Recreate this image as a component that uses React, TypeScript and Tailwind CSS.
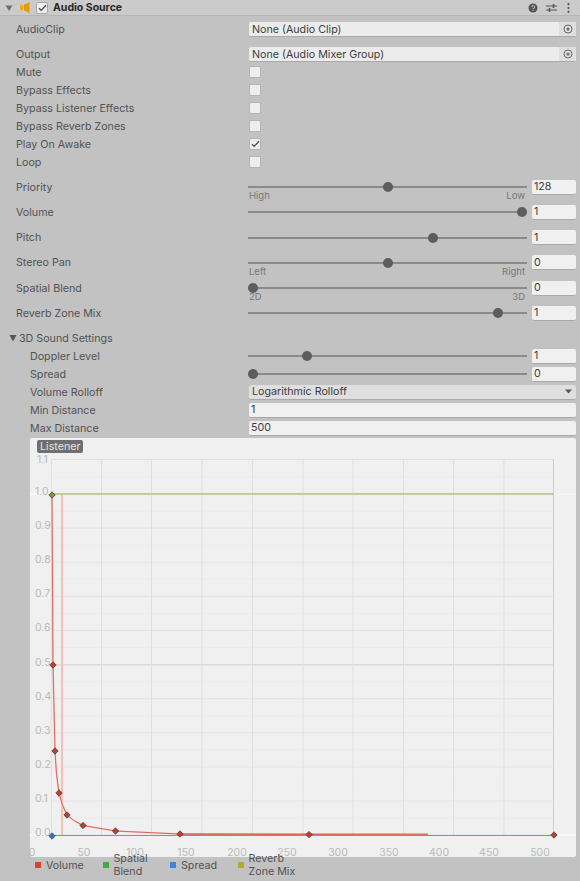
import type { ReactNode } from "react";

function Label({ text, indent }: { text: string; indent?: boolean }) {
  return (
    <span className={`w-[249px] shrink-0 text-[#525252] ${indent ? "pl-[30px]" : "pl-[16px]"}`}>
      {text}
    </span>
  );
}

function Row({ label, indent, children }: { label: string; indent?: boolean; children?: ReactNode }) {
  return (
    <div className="flex h-[18px] items-center">
      <Label text={label} indent={indent} />
      {children}
    </div>
  );
}

function Check({ on }: { on?: boolean }) {
  return (
    <div className="flex h-[12px] w-[12px] items-center justify-center rounded-[2px] border border-[#b5b5b5] bg-[#eeeeee]">
      {on && (
        <svg width="9" height="8" viewBox="0 0 9 8" fill="none">
          <path d="M1 4.2 L3.2 6.4 L8 1.2" stroke="#4a4a4a" strokeWidth="1.3" />
        </svg>
      )}
    </div>
  );
}

function ObjectField({ text }: { text: string }) {
  return (
    <div className="flex h-[15px] w-[327px] items-center rounded-[2px] border-b border-[#a9a9a9] bg-[#ececec] text-[#3d3d3d]">
      <span className="flex-1 pl-[3px]">{text}</span>
      <div className="flex h-full w-[17px] items-center justify-center bg-[#dfdfdf]">
        <svg width="10" height="10" viewBox="0 0 10 10" fill="none">
          <circle cx="5" cy="5" r="4" stroke="#666666" strokeWidth="1" />
          <circle cx="5" cy="5" r="1.5" fill="#666666" />
        </svg>
      </div>
    </div>
  );
}

function TextField({ text, width = "w-[327px]" }: { text: string; width?: string }) {
  return (
    <div className={`flex h-[15px] items-center rounded-[2px] border-b border-[#a9a9a9] bg-[#f0f0f0] pl-[2px] text-[#3d3d3d] ${width}`}>
      {text}
    </div>
  );
}

function Slider({ percent, value }: { percent: number; value: string }) {
  return (
    <div className="flex w-[331px] items-center">
      <div className="relative ml-[-1px] h-[2px] w-[279px] bg-[#8a8a8a]">
        <div
          className="absolute top-[-4px] ml-[-5px] h-[10px] w-[10px] rounded-full bg-[#5d5d5d]"
          style={{ left: `${percent}%` }}
        />
      </div>
      <div className="ml-[5px]">
        <TextField text={value} width="w-[44px]" />
      </div>
    </div>
  );
}

function SliderRow({
  label,
  percent,
  value,
  low,
  high,
}: {
  label: string;
  percent: number;
  value: string;
  low?: string;
  high?: string;
}) {
  return (
    <div className="h-[25.3px]">
      <Row label={label}>
        <Slider percent={percent} value={value} />
      </Row>
      {low && (
        <div className="ml-[249px] flex h-[7px] w-[276px] items-start justify-between text-[9.5px] leading-[10px] text-[#777777]">
          <span className="mt-[-5px]">{low}</span>
          <span className="mt-[-5px]">{high}</span>
        </div>
      )}
    </div>
  );
}

const majorX = [101.5, 151.5, 202, 252.5, 303, 353, 403.5, 453.5, 504];
const xLabels = [
  [32, "0"],
  [84, "50"],
  [135, "100"],
  [186, "150"],
  [237, "200"],
  [287, "250"],
  [338, "300"],
  [389, "350"],
  [439, "400"],
  [489, "450"],
  [540, "500"],
] as const;
const yLabels = ["1.0", "0.9", "0.8", "0.7", "0.6", "0.5", "0.4", "0.3", "0.2", "0.1", "0.0"];
const keys = [
  [53, 665],
  [55, 751],
  [59, 793],
  [67, 815],
  [83, 825.5],
  [115.5, 831],
  [180, 834],
  [309, 834.6],
  [554, 835],
];

function Diamond({ x, y, fill }: { x: number; y: number; fill: string }) {
  return (
    <path
      d={`M${x} ${y - 3.2} L${x + 3.2} ${y} L${x} ${y + 3.2} L${x - 3.2} ${y} Z`}
      fill={fill}
      stroke="#444444"
      strokeWidth="0.8"
    />
  );
}

function RolloffGraph() {
  const curve = "M52 494 L53 665 L55 751 Q56 775 59 793 Q62 806 67 815 Q73 821 83 825.5 L115.5 831 L180 834 L309 834.6 L428 835";
  return (
    <svg className="block overflow-visible" width="546" height="419" viewBox="30 438 546 419">
      {Array.from({ length: 21 }, (_, i) => (
        <line key={i} x1="51" x2="554" y1={494 + i * 17.06} y2={494 + i * 17.06} stroke={i % 2 ? "#ececec" : "#e3e3e3"} />
      ))}
      <line x1="51" x2="554" y1="477" y2="477" stroke="#ececec" />
      <line x1="51" x2="554" y1="459.5" y2="459.5" stroke="#e0e0e0" />
      <line x1="51" x2="554" y1="665" y2="665" stroke="#d6d6d6" />
      <line x1="51.5" x2="51.5" y1="459" y2="835" stroke="#e0e0e0" />
      {majorX.map((x) => (
        <line key={x} x1={x} x2={x} y1="459" y2="835" stroke="#dfdfdf" />
      ))}
      <line x1="553.5" x2="553.5" y1="459" y2="835" stroke="#cfcfcf" />
      <line x1="30" x2="50" y1="494" y2="494" stroke="#ffffff" />
      <line x1="30" x2="50" y1="835" y2="835" stroke="#ffffff" />
      <line x1="554" x2="576" y1="494" y2="494" stroke="#fafafa" />
      <line x1="554" x2="576" y1="835" y2="835" stroke="#ffffff" />

      <g fontFamily="Inter, sans-serif" fontSize="10.5" fill="#b9b9b9">
        <text x="37" y="463">1.1</text>
        {yLabels.map((t, i) => (
          <text key={t} x="35" y={495 + i * 34.1}>
            {t}
          </text>
        ))}
        {xLabels.map(([x, t]) => (
          <text key={t} x={x} y="856" textAnchor="middle">
            {t}
          </text>
        ))}
      </g>

      <line x1="62" x2="62" y1="494" y2="835" stroke="#f6c0ba" strokeWidth="2" />
      <line x1="52" x2="554" y1="494" y2="494" stroke="#c9c9a0" strokeWidth="2" />
      <path d={curve} fill="none" stroke="#f3c4be" strokeWidth="1.6" />
      <path d={curve} fill="none" stroke="#cf5040" strokeWidth="0.8" />
      <line x1="52" x2="554" y1="835.5" y2="835.5" stroke="#6d93d6" strokeWidth="1.2" />
      <line x1="180" x2="428" y1="834.2" y2="834.2" stroke="#d8675a" strokeWidth="1.2" />

      {keys.map(([x, y]) => (
        <Diamond key={x} x={x} y={y} fill="#c63c28" />
      ))}
      <Diamond x={52} y={495} fill="#8f8f1c" />
      <Diamond x={52} y={836} fill="#3a72d0" />
    </svg>
  );
}

function LegendItem({ color, lines }: { color: string; lines: string[] }) {
  return (
    <div className="flex w-[67.5px] shrink-0 items-center">
      <div className={`mr-[5px] h-[6px] w-[6px] shrink-0 ${color}`} />
      <div className="leading-[13px] text-[#525252]">
        {lines.map((l) => (
          <div key={l} className="whitespace-nowrap">
            {l}
          </div>
        ))}
      </div>
    </div>
  );
}

export default function App() {
  return (
    <div
      className="h-[881px] w-[580px] overflow-hidden bg-[#c2c2c2] text-[10.7px] leading-[13px]"
      style={{ fontFamily: "Inter, sans-serif" }}
    >
      <div className="flex h-[16px] items-center border-b border-[#b5b5b5] bg-[#cbcbcb]">
        <svg className="ml-[5px]" width="8" height="8" viewBox="0 0 8 8">
          <path d="M0.5 1.5 H7.5 L4 7 Z" fill="#6e6e6e" />
        </svg>
        <svg className="ml-[7px]" width="10" height="11" viewBox="0 0 10 11">
          <path d="M0 3 H3 V8 H0 Z" fill="#f0a818" />
          <path d="M4 2.8 L9.5 0 V11 L4 8.2 Z" fill="#e69a00" />
        </svg>
        <div className="ml-[6px] flex h-[12px] w-[12px] items-center justify-center rounded-[2px] border border-[#a8a8a8] bg-[#eeeeee]">
          <svg width="9" height="8" viewBox="0 0 9 8" fill="none">
            <path d="M1 4.2 L3.2 6.4 L8 1.2" stroke="#4a4a4a" strokeWidth="1.3" />
          </svg>
        </div>
        <span className="ml-[5px] flex-1 text-[10.5px] font-bold text-[#262626]">Audio Source</span>
        <svg width="10" height="10" viewBox="0 0 10 10" className="mr-[8px]">
          <circle cx="5" cy="5" r="4.5" fill="#555555" />
          <path d="M3.6 4 A1.5 1.5 0 1 1 5 5.6 V6.2 M5 7 V7.8" stroke="#cbcbcb" strokeWidth="0.9" fill="none" />
        </svg>
        <svg width="11" height="10" viewBox="0 0 11 10" className="mr-[10px]" stroke="#555555" fill="none">
          <path d="M0 3 H11 M0 7 H11" />
          <path d="M7.5 1 V5 M3.5 5 V9" strokeWidth="1.5" />
        </svg>
        <svg width="3" height="10" viewBox="0 0 3 10" className="mr-[10.5px]" fill="#555555">
          <circle cx="1.5" cy="1.2" r="1.1" />
          <circle cx="1.5" cy="5" r="1.1" />
          <circle cx="1.5" cy="8.8" r="1.1" />
        </svg>
      </div>

      <div className="mt-[6px] flex h-[15px] items-center">
        <Label text="AudioClip" />
        <ObjectField text="None (Audio Clip)" />
      </div>
      <div className="mt-[10px] flex h-[15px] items-center">
        <Label text="Output" />
        <ObjectField text="None (Audio Mixer Group)" />
      </div>

      <div className="mt-[1px]">
        <Row label="Mute"><Check /></Row>
        <Row label="Bypass Effects"><Check /></Row>
        <Row label="Bypass Listener Effects"><Check /></Row>
        <Row label="Bypass Reverb Zones"><Check /></Row>
        <Row label="Play On Awake"><Check on /></Row>
        <Row label="Loop"><Check /></Row>
      </div>

      <div className="mt-[7px] h-[151px]">
        <SliderRow label="Priority" percent={50} value="128" low="High" high="Low" />
        <SliderRow label="Volume" percent={98.3} value="1" />
        <SliderRow label="Pitch" percent={66.3} value="1" />
        <SliderRow label="Stereo Pan" percent={50} value="0" low="Left" high="Right" />
        <SliderRow label="Spatial Blend" percent={1.9} value="0" low="2D" high="3D" />
        <SliderRow label="Reverb Zone Mix" percent={89.6} value="1" />
      </div>

      <div className="flex h-[18px] items-center">
        <svg className="ml-[9px] mr-[2px]" width="8" height="8" viewBox="0 0 8 8">
          <path d="M0.5 1 H7.5 L4 7.5 Z" fill="#555555" />
        </svg>
        <span className="text-[#525252]">3D Sound Settings</span>
      </div>
      <Row label="Doppler Level" indent>
        <Slider percent={21.2} value="1" />
      </Row>
      <Row label="Spread" indent>
        <Slider percent={1.9} value="0" />
      </Row>
      <Row label="Volume Rolloff" indent>
        <div className="flex h-[15px] w-[327px] items-center rounded-[2px] border-b border-[#a9a9a9] bg-[#dfdfdf] pl-[3px] text-[#3d3d3d]">
          <span className="flex-1">Logarithmic Rolloff</span>
          <svg className="mr-[4px]" width="7" height="5" viewBox="0 0 7 5">
            <path d="M0 0.5 H7 L3.5 4.5 Z" fill="#555555" />
          </svg>
        </div>
      </Row>
      <Row label="Min Distance" indent>
        <TextField text="1" />
      </Row>
      <Row label="Max Distance" indent>
        <TextField text="500" />
      </Row>

      <div className="relative ml-[30px] mt-[1px] w-[546px] rounded-[2px] bg-[#f0f0f0]">
        <div className="absolute left-[7px] top-[2px] rounded-[2px] bg-[#6f6f6f] px-[3px] text-[#e4e4e4]">
          Listener
        </div>
        <RolloffGraph />
      </div>

      <div className="relative ml-[35px] flex h-[16px] items-center">
        <LegendItem color="bg-[#d8432f]" lines={["Volume"]} />
        <LegendItem color="bg-[#3fae3f]" lines={["Spatial", "Blend"]} />
        <LegendItem color="bg-[#3f82e0]" lines={["Spread"]} />
        <LegendItem color="bg-[#adad2b]" lines={["Reverb", "Zone Mix"]} />
      </div>
    </div>
  );
}
